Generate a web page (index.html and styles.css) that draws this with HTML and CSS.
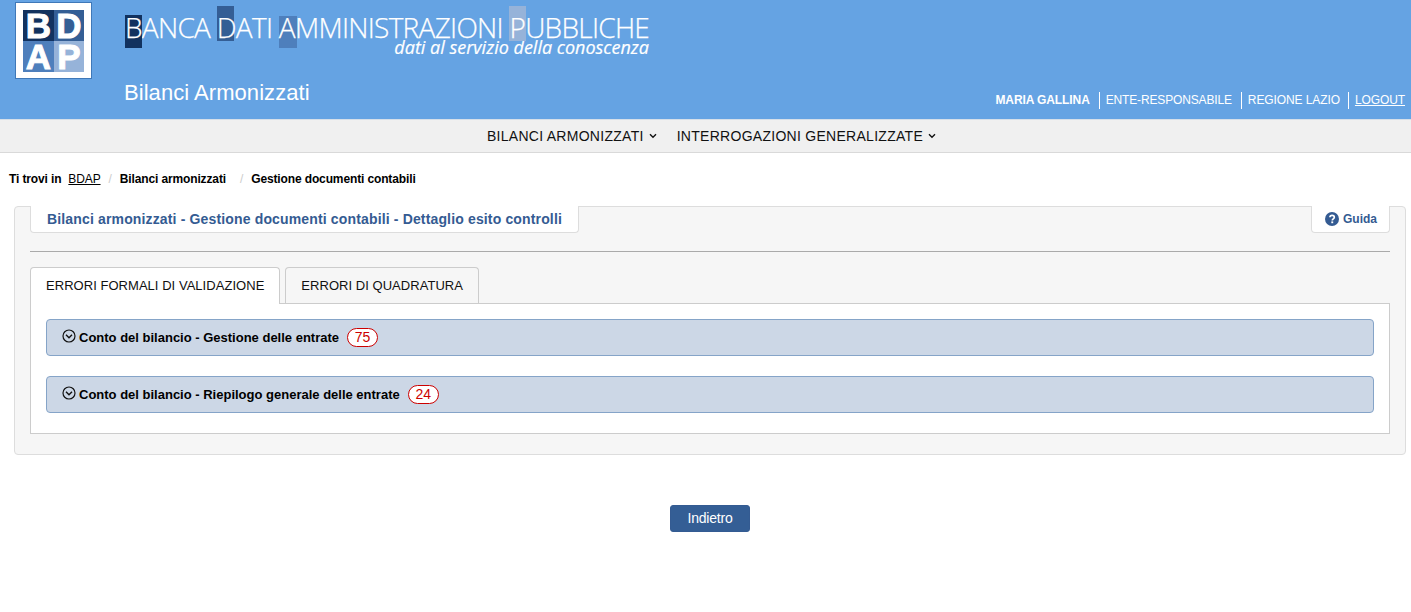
FILE: index.html
```html
<!DOCTYPE html>
<html lang="it">
<head>
<meta charset="utf-8">
<title>BDAP - Bilanci Armonizzati</title>
<link rel="stylesheet" href="styles.css">
</head>
<body>
<header class="header">
  <div class="logo">
    <div class="logo-grid">
      <span class="q q1">B</span><span class="q q2">D</span><span class="q q3">A</span><span class="q q4">P</span>
    </div>
  </div>
  <div class="brand">
    <div class="brand-title"><span class="hl hl-b">B</span>ANCA <span class="hl hl-d">D</span>ATI <span class="hl hl-a">A</span>MMINISTRAZIONI <span class="hl hl-p">P</span>UBBLICHE</div>
    <div class="brand-sub">dati al servizio della conoscenza</div>
    <div class="brand-app">Bilanci Armonizzati</div>
  </div>
  <ul class="user">
    <li class="user-name">MARIA GALLINA</li>
    <li class="user-org">ENTE-RESPONSABILE</li>
    <li>REGIONE LAZIO</li>
    <li><a href="#">LOGOUT</a></li>
  </ul>
</header>
<nav class="nav">
  <a href="#">BILANCI ARMONIZZATI<svg class="caret" viewBox="0 0 8 6" width="8" height="6"><path d="M1 1.2 4 4.2 7 1.2" fill="none" stroke="#111" stroke-width="1.4"/></svg></a>
  <a href="#">INTERROGAZIONI GENERALIZZATE<svg class="caret" viewBox="0 0 8 6" width="8" height="6"><path d="M1 1.2 4 4.2 7 1.2" fill="none" stroke="#111" stroke-width="1.4"/></svg></a>
</nav>
<div class="crumbs">
  <span>Ti trovi in</span><a href="#">BDAP</a><i>/</i><span>Bilanci armonizzati</span><i class="wide">/</i><span>Gestione documenti contabili</span>
</div>
<main class="panel">
  <div class="panel-head">
    <h1 class="panel-title">Bilanci armonizzati - Gestione documenti contabili - Dettaglio esito controlli</h1>
    <a class="guide" href="#"><svg viewBox="0 0 14 14" width="14" height="14"><circle cx="7" cy="7" r="7" fill="#345b92"/><path d="M4.9 5.3C5 4 6 3.3 7.1 3.3c1.300 0 2.200.8 2.200 1.900 0 1.700-2 1.600-2 3.200" fill="none" stroke="#fff" stroke-width="1.700"/><rect x="6.300" y="9.400" width="1.900" height="1.800" fill="#fff"/></svg>Guida</a>
  </div>
  <hr class="rule">
  <div class="tabs">
    <a class="tab active" href="#">ERRORI FORMALI DI VALIDAZIONE</a>
    <a class="tab" href="#">ERRORI DI QUADRATURA</a>
  </div>
  <section class="tab-body">
    <div class="acc">
      <svg class="chev" viewBox="0 0 14 14" width="14" height="14"><circle cx="7" cy="7" r="6" fill="none" stroke="#111" stroke-width="1.200"/><path d="M4 5.800 7 8.800 10 5.800" fill="none" stroke="#111" stroke-width="1.400"/></svg>
      <span class="acc-label">Conto del bilancio - Gestione delle entrate</span><span class="pill">75</span>
    </div>
    <div class="acc">
      <svg class="chev" viewBox="0 0 14 14" width="14" height="14"><circle cx="7" cy="7" r="6" fill="none" stroke="#111" stroke-width="1.200"/><path d="M4 5.800 7 8.800 10 5.800" fill="none" stroke="#111" stroke-width="1.400"/></svg>
      <span class="acc-label">Conto del bilancio - Riepilogo generale delle entrate</span><span class="pill">24</span>
    </div>
  </section>
</main>
<div class="actions"><button class="btn" type="button">Indietro</button></div>
</body>
</html>
```
FILE: styles.css
```css
* { box-sizing: border-box; }
html, body { margin: 0; padding: 0; }
body {
  background: #fff;
  color: #000;
  font-family: "Liberation Sans", Arial, sans-serif;
  font-size: 14px;
}
a { color: inherit; }

.header {
  height: 120px;
  background: #65a3e3;
  border-bottom: 1px solid #d6dfe9;
  display: flex;
  align-items: flex-start;
  position: relative;
  color: #fff;
}
.logo {
  width: 77px;
  height: 77px;
  margin: 2px 0 0 15px;
  background: #fff;
  border: 1px solid #3f78b8;
  padding: 7px 7px 6px 7px;
  flex: none;
}
.logo-grid {
  display: grid;
  grid-template-columns: 31px 30px;
  grid-template-rows: 31px 31px;
  width: 61px;
  height: 62px;
}
.q {
  text-align: center;
  color: #fff;
  font-weight: 700;
  font-size: 35px;
  line-height: 31px;
  -webkit-text-stroke: 1px #fff;
}
.q1 { background: #12325f; }
.q2 { background: #345e95; }
.q3 { background: #4e7fbc; }
.q4 { background: #96b3d9; }

.brand { margin-left: 33px; width: 524px; flex: none; }
.brand-title {
  font-family: "Open Sans", sans-serif;
  font-weight: 300;
  font-size: 28px;
  letter-spacing: -0.71px;
  -webkit-text-stroke: 0.25px #fff;
  line-height: 26px;
  padding-top: 14px;
  height: 41px;
  white-space: nowrap;
}
.hl { position: relative; display: inline-block; z-index: 0; }
.hl::before {
  content: "";
  position: absolute;
  left: 0;
  width: 17px;
  z-index: -1;
}
.hl-b::before { top: 1px; height: 33px; background: #12325f; }
.hl-d::before { top: -8px; height: 35px; background: #345e95; }
.hl-a::before { top: 2px; height: 32px; width: 18px; background: #4e7fbc; }
.hl-p::before { top: -8px; height: 35px; background: #96b3d9; }
.brand-sub {
  font-family: "Open Sans", sans-serif;
  font-style: italic;
  font-size: 18px;
  -webkit-text-stroke: 0.2px #fff;
  line-height: 18px;
  margin-top: -3px;
  text-align: right;
  white-space: nowrap;
}
.brand-app {
  font-size: 22px;
  letter-spacing: 0.05px;
  line-height: 24px;
  margin-top: 25px;
  margin-left: -1px;
  white-space: nowrap;
}

.user {
  list-style: none;
  margin: 0;
  padding: 0;
  position: absolute;
  right: 6px;
  bottom: 10px;
  display: flex;
  font-size: 12px;
  line-height: 17px;
  letter-spacing: -0.1px;
}
.user li { padding: 0 0 0 6px; margin-left: 9px; border-left: 1px solid #fff; }
.user li:first-child { border-left: 0; padding: 0; margin: 0; }
.user-name { font-weight: 700; }
.user li.user-org { letter-spacing: -0.15px; }
.user li:nth-child(4) { margin-left: 8px; }

.nav {
  height: 33px;
  background: #f0f0f0;
  border-bottom: 1px solid #d9d9d9;
  display: flex;
  justify-content: center;
  align-items: center;
  gap: 20px;
  font-size: 14px;
  letter-spacing: 0.28px;
  padding-left: 12px;
}
.nav a { text-decoration: none; color: #111; display: flex; align-items: center; }
.caret { margin-left: 5px; }

.crumbs {
  height: 53px;
  padding: 19px 0 0 9px;
  font-size: 12px;
  line-height: 14px;
  font-weight: 700;
  letter-spacing: -0.13px;
  display: flex;
  color: #000;
}
.crumbs a { font-weight: 400; margin-left: 7px; }
.crumbs i { font-style: normal; font-weight: 400; color: #ccc; margin: 0 8px; }
.crumbs i.wide { margin: 0 8px 0 14px; }

.panel {
  margin: 0 5px 0 14px;
  height: 249px;
  background: #f6f6f6;
  border: 1px solid #ddd;
  border-radius: 4px;
  padding: 0 15px;
}
.panel-head { display: flex; justify-content: space-between; align-items: flex-start; margin-top: -1px; }
.panel-title {
  margin: 0;
  height: 27px;
  padding: 0 16px;
  background: #fff;
  border: 1px solid #ddd;
  border-top: 0;
  border-radius: 0 0 4px 4px;
  color: #345b92;
  font-size: 14px;
  font-weight: 700;
  letter-spacing: 0.15px;
  line-height: 26px;
}
.guide {
  height: 27px;
  width: 79px;
  background: #fff;
  border: 1px solid #ddd;
  border-top: 0;
  border-radius: 0 0 4px 4px;
  color: #345b92;
  font-size: 12px;
  font-weight: 700;
  text-decoration: none;
  display: flex;
  align-items: center;
  justify-content: center;
  gap: 4px;
  padding-left: 1px;
}
.rule { margin: 18px 0 15px; border: 0; border-top: 1px solid #aaa; }
.tabs { display: flex; gap: 5px; height: 36px; position: relative; z-index: 1; }
.tab {
  height: 36px;
  padding: 0 15px;
  border: 1px solid #ccc;
  border-bottom: 0;
  border-radius: 4px 4px 0 0;
  line-height: 35px;
  font-size: 13px;
  letter-spacing: 0.04px;
  text-decoration: none;
  color: #111;
}
.tab.active { background: #fff; height: 37px; }
.tab-body {
  height: 131px;
  background: #fff;
  border: 1px solid #ccc;
  padding: 15px;
  display: flex;
  flex-direction: column;
  gap: 20px;
}
.acc {
  height: 37px;
  background: #ccd7e6;
  border: 1px solid #85a4c8;
  border-radius: 4px;
  display: flex;
  align-items: center;
  padding: 0 0 1px 15px;
  font-size: 13px;
  font-weight: 700;
  color: #000;
}
.chev { margin-right: 3px; position: relative; top: -1px; }
.pill {
  margin-left: 8px;
  width: 31px;
  height: 19px;
  border: 1px solid #c00;
  border-radius: 10px;
  background: #fff;
  color: #c00;
  font-size: 14px;
  font-weight: 400;
  text-align: center;
  line-height: 17px;
}

.actions { display: flex; justify-content: center; padding: 50px 0 0 9px; }
.btn {
  width: 80px;
  height: 27px;
  background: #345e95;
  border: 1px solid #345b92;
  border-radius: 3px;
  color: #fff;
  font: 14px "Liberation Sans", Arial, sans-serif;
  letter-spacing: -0.2px;
  padding: 0 0 1px;
}
```
